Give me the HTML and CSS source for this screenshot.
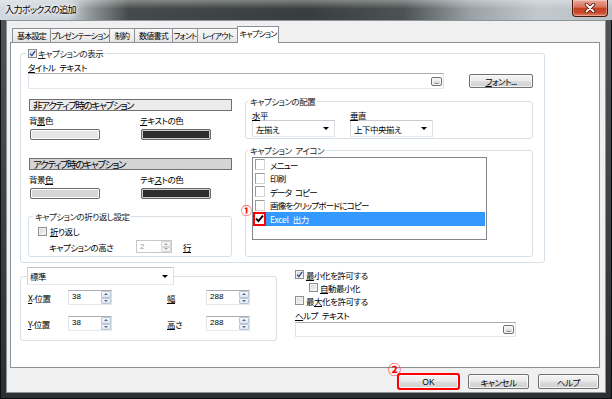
FILE: index.html
```html
<!DOCTYPE html>
<html lang="ja">
<head>
<meta charset="UTF-8">
<title>入力ボックスの追加</title>
<link rel="stylesheet" href="styles.css">
</head>
<body>
<div class="window">
	<div class="titlebar">
		<span class="title">入力ボックスの追加</span>
		<span class="close"><svg width="12" height="10" viewBox="0 0 12 10"><path d="M2.5 1.5 L9.5 8.5 M9.5 1.5 L2.5 8.5" stroke="#4a150c" stroke-width="3.4" stroke-linecap="round"/><path d="M2.5 1.5 L9.5 8.5 M9.5 1.5 L2.5 8.5" stroke="#fff" stroke-width="1.8" stroke-linecap="round"/></svg></span>
	</div>
	<div class="client">
		<div class="tabs">
			<span class="tab w39">基本設定</span>
			<span class="tab w60">プレゼンテーション</span>
			<span class="tab w26">制約</span>
			<span class="tab w39">数値書式</span>
			<span class="tab w26">フォント</span>
			<span class="tab w41">レイアウト</span>
			<span class="tab w42 on">キャプション</span>
		</div>
		<div class="panel">
			<fieldset class="grp grp-main">
				<legend><i class="cb"><svg width="7" height="7" viewBox="0 0 7 7"><path d="M1 3.6 L2.8 5.6 L6.2 0.8" fill="none" stroke="#2a4c9c" stroke-width="1.3"/></svg></i><u>キ</u>ャプションの表示</legend>
				<div class="main-body">
					<div class="lbl"><u>タ</u>イトル テキスト</div>
					<div class="title-row">
						<div class="txt title-input"><span class="btn dots">...</span></div>
						<div class="btn font-btn"><u>フ</u>ォント...</div>
					</div>
					<div class="cols">
						<div class="col-left">
							<div class="cap-head">非アクティブ時のキャプション</div>
							<div class="color-lbls"><span>背<u>景</u>色</span><span><u>テ</u>キストの色</span></div>
							<div class="swatches"><span class="sw light"></span><span class="sw dark"></span></div>
							<div class="cap-head active">アクティブ時のキャプション</div>
							<div class="color-lbls"><span>背景<u>色</u></span><span>テキ<u>ス</u>トの色</span></div>
							<div class="swatches"><span class="sw light2"></span><span class="sw dark"></span></div>
							<fieldset class="grp grp-wrap">
								<legend>キャプションの折り返し設定</legend>
								<div class="wrap-body">
									<div class="cb-row"><i class="cb"></i><u>折</u>り返し</div>
									<div class="height-row">
										<span class="name">キャプションの高さ</span>
										<div class="spin dis"><span class="val">2</span><span class="arr"><i class="up"></i><i class="down"></i></span></div>
										<span class="unit"><u>行</u></span>
									</div>
								</div>
							</fieldset>
						</div>
						<div class="col-right">
							<fieldset class="grp grp-align">
								<legend>キャプションの配置</legend>
								<div class="align-body">
									<div class="field">
										<div class="lbl"><u>水</u>平</div>
										<div class="combo">左揃え</div>
									</div>
									<div class="field">
										<div class="lbl"><u>垂</u>直</div>
										<div class="combo">上下中央揃え</div>
									</div>
								</div>
							</fieldset>
							<fieldset class="grp grp-icons">
								<legend>キャプション アイコン</legend>
								<div class="list">
									<div class="item"><span class="box"><i class="lcb"></i></span><span class="text">メニュー</span></div>
									<div class="item"><span class="box"><i class="lcb"></i></span><span class="text">印刷</span></div>
									<div class="item"><span class="box"><i class="lcb"></i></span><span class="text">データ コピー</span></div>
									<div class="item"><span class="box"><i class="lcb"></i></span><span class="text">画像をクリップボードにコピー</span></div>
									<div class="item sel"><span class="box mark"><svg width="9" height="9" viewBox="0 0 9 9"><path d="M1 4.6 L3.4 7 L8 1.6" fill="none" stroke="#000" stroke-width="1.9"/></svg></span><span class="text">Excel 出力</span></div>
									<span class="note n1">①</span>
								</div>
							</fieldset>
						</div>
					</div>
				</div>
			</fieldset>
			<div class="lower">
				<fieldset class="grp grp-pos">
					<legend class="combo std">標準</legend>
					<div class="pos-body">
						<div class="pos-row">
							<span class="pname"><u>X</u>-位置</span>
							<div class="spin"><span class="val">38</span><span class="arr"><i class="up"></i><i class="down"></i></span></div>
							<span class="pname right"><u>幅</u></span>
							<div class="spin"><span class="val">288</span><span class="arr"><i class="up"></i><i class="down"></i></span></div>
						</div>
						<div class="pos-row">
							<span class="pname"><u>Y</u>-位置</span>
							<div class="spin"><span class="val">38</span><span class="arr"><i class="up"></i><i class="down"></i></span></div>
							<span class="pname right"><u>高</u>さ</span>
							<div class="spin"><span class="val">288</span><span class="arr"><i class="up"></i><i class="down"></i></span></div>
						</div>
					</div>
				</fieldset>
				<div class="opts">
					<div class="opt"><i class="cb"><svg width="7" height="7" viewBox="0 0 7 7"><path d="M1 3.6 L2.8 5.6 L6.2 0.8" fill="none" stroke="#2a4c9c" stroke-width="1.3"/></svg></i><u>最</u>小化を許可する</div>
					<div class="opt sub"><i class="cb"></i><u>自</u>動最小化</div>
					<div class="opt"><i class="cb"></i>最<u>大</u>化を許可する</div>
					<div class="lbl help-lbl"><u>ヘ</u>ルプ テキスト</div>
					<div class="txt help-input"><span class="btn dots">...</span></div>
				</div>
			</div>
		</div>
		<div class="buttons">
			<div class="btn ok">OK<span class="note n2">②</span></div>
			<div class="btn">キャンセル</div>
			<div class="btn">ヘルプ</div>
		</div>
	</div>
</div>
</body>
</html>
```

FILE: styles.css
```css
*{
	box-sizing:border-box;
}
body{
	margin:0;
	background:#fff;
	font:8.5px/10px "Noto Sans CJK JP","Liberation Sans",sans-serif;
	font-feature-settings:"palt";
	letter-spacing:-0.5px;
	word-spacing:2.5px;
	color:#000;
}
u{
	text-decoration:underline;
	text-decoration-thickness:1px;
	text-underline-offset:1px;
}
i{
	font-style:normal;
}

/* window frame */
.window{
	width:612px;
	height:399px;
	overflow:hidden;
	background:linear-gradient(to bottom,#505657,#2b2f30);
	box-shadow:inset 0 0 0 1px #0d0e0f;
}
.titlebar{
	height:20px;
	display:flex;
	justify-content:space-between;
	align-items:flex-start;
	background:
		linear-gradient(to bottom,rgba(255,255,255,.35),rgba(255,255,255,0) 45%),
		linear-gradient(to right,#d0d8df 0%,#c6ced5 11%,#8d9495 15%,#454b4a 21%,#383e3d 50%,#4c5352 66%,#9ba2a7 77%,#c1c8ce 88%,#b9c1c7 100%);
}
.title{
	margin:4px 0 0 5px;
	font-size:9px;
	line-height:11px;
	letter-spacing:-0.6px;
	text-shadow:0 0 3px #fff,0 0 5px #fff,0 0 8px rgba(255,255,255,.8);
}
.close{
	width:36px;
	height:17px;
	margin-right:4px;
	display:flex;
	align-items:center;
	justify-content:center;
	border:1px solid #4a1810;
	border-top:none;
	border-radius:0 0 4px 4px;
	background:linear-gradient(to bottom,#eaa99a,#d8705a 45%,#c2401f 52%,#c94b2d 80%,#e08669);
	box-shadow:inset 0 0 0 1px rgba(255,255,255,.3);
}
.client{
	margin:0 6px;
	height:373px;
	background:#f0f0f0;
	border:1px solid #8d9499;
}

/* tabs */
.tabs{
	height:21px;
	display:flex;
	align-items:flex-end;
	padding-left:5px;
}
.tab{
	height:14px;
	margin-left:-1px;
	display:flex;
	align-items:center;
	justify-content:center;
	white-space:nowrap;
	font-size:8px;
	letter-spacing:-0.8px;
	border:1px solid #8c8f97;
	border-bottom:none;
	background:linear-gradient(#f8f8f8,#e5e5e5);
}
.tab:first-child{
	margin-left:0;
}
.tab.on{
	height:17px;
	margin-bottom:-1px;
	padding-bottom:2px;
	background:#fff;
	position:relative;
	z-index:1;
}
.w26{width:26px;}
.w39{width:39px;}
.w41{width:41px;}
.w42{width:42px;}
.w60{width:60px;}
.panel{
	margin-left:3px;
	width:590px;
	height:326px;
	background:#fff;
	border:1px solid #8c8f97;
}

/* group boxes */
fieldset{
	margin:0;
	padding:0;
	min-width:0;
	border:1px solid #d5dfe5;
	border-radius:3px;
}
legend{
	padding:0 2px;
	line-height:10px;
	display:flex;
	align-items:center;
	white-space:pre;
	color:#1a1a1a;
}
.grp-main{
	margin:5px 0 0 9px;
	width:525px;
}
.grp-main>legend{
	margin-left:5px;
}
.grp-main>legend .cb{
	margin-right:1px;
}
.main-body{
	padding:4px 11px 5px 7px;
}
.lbl{
	height:10px;
	white-space:nowrap;
}
.title-row{
	display:flex;
	margin-top:1px;
}
.txt{
	height:16px;
	background:#fff;
	border:1px solid;
	border-color:#abadb3 #dbdfe6 #e3e9ef #e2e3ea;
}
.title-input{
	width:416px;
	display:flex;
	align-items:center;
	justify-content:flex-end;
	padding-right:1px;
}
.btn{
	display:flex;
	align-items:center;
	justify-content:center;
	white-space:nowrap;
	border:1px solid #707070;
	border-radius:2px;
	background:linear-gradient(#f3f3f3,#ebebeb 48%,#dddddd 52%,#cfcfcf);
	box-shadow:inset 0 0 0 1px rgba(255,255,255,.75);
}
.dots{
	width:11px;
	height:9px;
	font-size:6px;
	line-height:5px;
	align-items:flex-end;
	padding-bottom:1px;
	letter-spacing:-.5px;
}
.font-btn{
	width:64px;
	height:14px;
	margin:1px 0 0 25px;
}
.cols{
	display:flex;
	margin-top:7px;
}
.col-left{
	width:204px;
}
.col-right{
	width:288px;
	margin-left:13px;
}
.cap-head{
	width:203px;
	height:12px;
	margin:3px 0 0 1px;
	padding-left:3px;
	font-size:9.5px;
	line-height:10px;
	letter-spacing:-1.3px;
	white-space:nowrap;
	border:1px solid #6f6f6f;
	background:#ececec;
}
.cap-head.active{
	margin-top:18px;
	background:#d4d4d4;
}
.color-lbls{
	display:flex;
	margin-top:4px;
	padding-left:1px;
	height:10px;
}
.color-lbls span:first-child{
	width:111px;
}
.swatches{
	display:flex;
	gap:41px;
	margin:4px 0 0 2px;
}
.sw{
	width:70px;
	height:11px;
	border:1px solid #6b6b6b;
	border-radius:2px;
	box-shadow:inset 0 0 0 1px #fdfdfd;
}
.sw.light{
	background:#e6e6e6;
}
.sw.light2{
	background:#d6d6d6;
}
.sw.dark{
	background:#2e2e2e;
	box-shadow:inset 0 0 0 1px #cfcfcf;
}
.grp-wrap{
	margin-top:12px;
	width:204px;
}
.grp-wrap>legend{
	margin-left:4px;
}
.wrap-body{
	padding:5px 0 3px 9px;
}
.cb-row{
	display:flex;
	align-items:center;
	height:10px;
}
.cb-row .cb{
	margin-right:3px;
}
.height-row{
	display:flex;
	align-items:center;
	height:13px;
	margin-top:4px;
}
.height-row .name{
	width:87px;
	margin-left:11px;
	white-space:nowrap;
}
.height-row .spin{
	width:36px;
	height:13px;
}
.height-row .unit{
	margin-left:11px;
}

/* checkboxes */
.cb{
	display:inline-flex;
	align-items:center;
	justify-content:center;
	flex:none;
	width:9px;
	height:9px;
	border:1px solid #8e8f8f;
	background:linear-gradient(135deg,#d6d6d6,#f7f7f7);
	box-shadow:inset 0 0 0 1px #f2f2f2;
}
.cb svg{
	display:block;
}

/* right column */
.grp-align>legend,
.grp-icons>legend{
	margin-left:2px;
}
.align-body{
	display:flex;
	gap:15px;
	padding:4px 0 1px 6px;
}
.field{
	width:83px;
}
.combo{
	height:17px;
	display:flex;
	align-items:center;
	justify-content:space-between;
	padding:0 5px 0 3px;
	white-space:nowrap;
	background:#fff;
	border:1px solid;
	border-color:#c9cdd3 #dfe3e8 #e6e9ed #d7dbe0;
	color:#000;
}
.combo::after{
	content:"";
	border-left:3px solid transparent;
	border-right:3px solid transparent;
	border-top:3px solid #000;
}
.grp-icons{
	margin-top:6px;
	padding-bottom:16px;
}
.list{
	position:relative;
	width:235px;
	height:83px;
	margin:2px 0 0 6px;
	background:#fff;
	border:1px solid #82878f;
}
.item{
	display:flex;
	height:13.5px;
	align-items:stretch;
}
.item .box{
	width:13px;
	flex:none;
	display:flex;
	align-items:center;
	padding-left:2px;
}
.lcb{
	width:10px;
	height:11px;
	border:1px solid;
	border-color:#9a9a9a #d4d4d4 #d4d4d4 #9a9a9a;
	background:#fff;
}
.item .box.mark{
	padding-left:0;
	justify-content:center;
	border:2px solid #f00;
	background:#fff;
}
.item .text{
	flex:1;
	padding-left:4px;
	margin-right:1px;
	display:flex;
	align-items:center;
	white-space:pre;
	letter-spacing:-0.8px;
}
.item.sel .text{
	background:#3399ff;
	color:#fff;
	letter-spacing:-0.3px;
}
.note{
	position:absolute;
	color:#f00;
	font-size:11px;
	line-height:11px;
	font-weight:bold;
	letter-spacing:0;
}
.n1{
	left:-12px;
	top:47px;
}

/* lower part */
.lower{
	display:flex;
}
.grp-pos{
	width:257px;
	margin:4px 0 0 9px;
}
.combo.std{
	width:147px;
	height:18px;
	margin-left:6px;
	padding:0 5px 0 2px;
	border-color:#bfc3c9 #dfe3e8 #e6e9ed #d0d4d9;
}
.pos-body{
	padding:5px 0 9px 7px;
}
.pos-row{
	display:flex;
	align-items:center;
	height:15px;
}
.pos-row+.pos-row{
	margin-top:11px;
}
.pname{
	width:40px;
	white-space:nowrap;
}
.pname.right{
	width:39px;
	margin-left:55px;
}
.spin{
	display:flex;
	width:44px;
	height:15px;
	background:#fff;
	border:1px solid;
	border-color:#abadb3 #dbdfe6 #e3e9ef #e2e3ea;
}
.spin .val{
	flex:1;
	padding-left:3px;
	font-family:"Liberation Sans",sans-serif;
	font-size:8px;
	line-height:12px;
	letter-spacing:0;
}
.spin .arr{
	width:10px;
	display:flex;
	flex-direction:column;
}
.spin .arr i{
	flex:1;
	display:flex;
	align-items:center;
	justify-content:center;
	border:1px solid #b9c6d3;
	border-radius:1px;
	background:linear-gradient(#f7f9fc,#dde5ee);
}
.spin .arr .up::after{
	content:"";
	border-left:2px solid transparent;
	border-right:2px solid transparent;
	border-bottom:2px solid #4d6b92;
}
.spin .arr .down::after{
	content:"";
	border-left:2px solid transparent;
	border-right:2px solid transparent;
	border-top:2px solid #4d6b92;
}
.spin.dis{
	border-color:#c8c8c8;
	color:#9a9a9a;
}
.spin.dis .arr i{
	border-color:#d6d6d6;
	background:#f4f4f4;
}
.spin.dis .arr i::after{
	border-bottom-color:#aaa;
	border-top-color:#aaa;
}
.opts{
	width:221px;
	margin:5px 0 0 18px;
}
.opt{
	display:flex;
	align-items:center;
	height:13px;
	white-space:nowrap;
}
.opt .cb{
	margin-right:2px;
}
.opt.sub{
	padding-left:14px;
}
.help-lbl{
	margin-top:3px;
}
.help-input{
	height:15px;
	margin-top:2px;
	display:flex;
	align-items:center;
	justify-content:flex-end;
	padding-right:1px;
}

/* dialog buttons */
.buttons{
	display:flex;
	justify-content:flex-end;
	gap:9px;
	margin-top:6px;
	padding-right:6px;
}
.buttons .btn{
	width:61px;
	height:15px;
}
.btn.ok{
	position:relative;
	outline:2px solid #f00;
	outline-offset:-1px;
	font-family:"Liberation Sans",sans-serif;
	letter-spacing:0;
}
.n2{
	left:-11px;
	top:-13px;
	font-size:13px;
	line-height:13px;
	font-family:"Noto Sans CJK JP",sans-serif;
}
```
